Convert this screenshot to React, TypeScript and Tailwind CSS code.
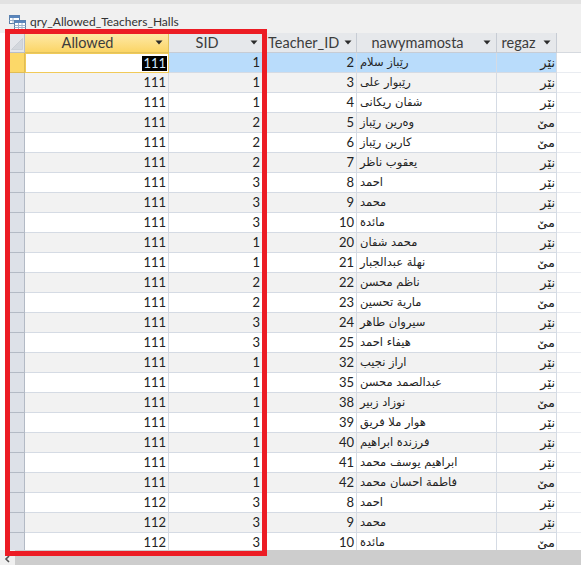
import React from "react";

type Row = [number, number, number, string, string];

const M = "نێر";
const F = "مێ";

const rows: Row[] = [
  [111, 1, 2, "رێباز سلام", M],
  [111, 1, 3, "رێبوار على", M],
  [111, 1, 4, "شفان ريكانى", M],
  [111, 2, 5, "وەرين رێباز", F],
  [111, 2, 6, "كارين رێباز", F],
  [111, 2, 7, "يعقوب ناظر", M],
  [111, 3, 8, "احمد", M],
  [111, 3, 9, "محمد", M],
  [111, 3, 10, "مائدة", F],
  [111, 1, 20, "محمد شفان", M],
  [111, 1, 21, "نهلة عبدالجبار", F],
  [111, 2, 22, "ناظم محسن", M],
  [111, 2, 23, "مارية تحسين", F],
  [111, 3, 24, "سيروان طاهر", M],
  [111, 3, 25, "هيفاء احمد", F],
  [111, 1, 32, "اراز نجيب", M],
  [111, 1, 35, "عبدالصمد محسن", M],
  [111, 1, 38, "نوزاد زبير", F],
  [111, 1, 39, "هوار ملا فريق", M],
  [111, 1, 40, "فرزندة ابراهيم", M],
  [111, 1, 41, "ابراهيم يوسف محمد", M],
  [111, 1, 42, "فاطمة احسان محمد", F],
  [112, 3, 8, "احمد", M],
  [112, 3, 9, "محمد", M],
  [112, 3, 10, "مائدة", F],
];

const latin = "font-['Lato','Liberation_Sans',sans-serif]";
const arabic = "font-['DejaVu_Sans','Noto_Sans',sans-serif]";

function Arrow() {
  return (
    <span className="w-[18px] h-full flex items-center justify-center shrink-0">
      <svg width="8" height="5" viewBox="0 0 8 5">
        <path d="M0.5 0.5 L7.5 0.5 L4 4.5 Z" fill="#2b2b2b" />
      </svg>
    </span>
  );
}

function QueryIcon() {
  return (
    <svg width="17" height="15" viewBox="0 0 17 15" className="shrink-0">
      <rect x="0.5" y="0.5" width="10" height="8" fill="#ffffff" stroke="#5b7fa8" />
      <rect x="0.5" y="0.5" width="10" height="2.5" fill="#5a86bd" />
      <line x1="0.5" y1="5.5" x2="10.5" y2="5.5" stroke="#9fb3cc" />
      <line x1="4" y1="3" x2="4" y2="8.5" stroke="#9fb3cc" />
      <rect x="5.5" y="5.5" width="11" height="9" fill="#ffffff" stroke="#5b7fa8" />
      <rect x="5.5" y="5.5" width="11" height="2.5" fill="#5a86bd" />
      <line x1="5.5" y1="10.5" x2="16.5" y2="10.5" stroke="#9fb3cc" />
      <line x1="5.5" y1="12.5" x2="16.5" y2="12.5" stroke="#9fb3cc" />
      <line x1="9.5" y1="8" x2="9.5" y2="14.5" stroke="#9fb3cc" />
      <line x1="13" y1="8" x2="13" y2="14.5" stroke="#9fb3cc" />
    </svg>
  );
}

export default function App() {
  return (
    <div className="relative w-[581px] h-[565px] overflow-hidden bg-white text-[#222]">
      {/* title strip */}
      <div className="h-[33px] bg-[#f0f0f0] border-t-[4px] border-[#e2e2e2] flex items-center pl-[9px] pt-[7px] gap-[4px]">
        <QueryIcon />
        <span className={`${latin} text-[12px] text-[#333] leading-none`}>
          qry_Allowed_Teachers_Halls
        </span>
      </div>

      {/* grid */}
      <div className="pl-[9px]">
        {/* header */}
        <div className={`flex h-[20px] ${latin} text-[14.5px] text-[#3c3c3c]`}>
          <div className="w-[16px] shrink-0 bg-[#e4e6ea] border-r border-b border-[#b8bec8] relative">
            <svg width="15" height="19" viewBox="0 0 15 19" className="absolute left-0 top-0">
              <path d="M2.5 16.5 L13.5 5.5 L13.5 16.5 Z" fill="#d3d7dd" stroke="#c6cbd2" strokeWidth="0.8" />
            </svg>
          </div>
          <div className="w-[144px] shrink-0 flex items-center bg-linear-to-b from-[#feeaa8] to-[#fbd565] border-r border-b border-[#e2c25a]">
            <span className="flex-1 text-center whitespace-nowrap">Allowed</span>
            <Arrow />
          </div>
          <div className="w-[95px] shrink-0 flex items-center bg-[#e6e8eb] border-r border-b border-[#c7ccd4]">
            <span className="flex-1 text-center whitespace-nowrap">SID</span>
            <Arrow />
          </div>
          <div className="w-[93px] shrink-0 flex items-center bg-[#e6e8eb] border-r border-b border-[#c7ccd4]">
            <span className="flex-1 pl-[4px] whitespace-nowrap">Teacher_ID</span>
            <Arrow />
          </div>
          <div className="w-[140px] shrink-0 flex items-center bg-[#e6e8eb] border-r border-b border-[#c7ccd4]">
            <span className="flex-1 text-center whitespace-nowrap">nawymamosta</span>
            <Arrow />
          </div>
          <div className="w-[60px] shrink-0 flex items-center bg-[#e6e8eb] border-r border-b border-[#c7ccd4]">
            <span className="flex-1 text-center whitespace-nowrap pl-[2px]">regaz</span>
            <Arrow />
          </div>
          <div className="flex-1 bg-[#f0f0f0] border-b border-[#d5d9df]" />
        </div>

        {/* body */}
        <div className="h-[497px] overflow-hidden">
          {rows.map((r, i) => {
            const sel = i === 0;
            const bg = sel ? "bg-[#b9dcfb]" : i % 2 === 1 ? "bg-[#f2f2f2]" : "bg-white";
            return (
              <div key={i} className="flex h-[20px]">
                <div
                  className={`w-[16px] shrink-0 border-r border-b ${
                    sel ? "bg-[#fcd868] border-[#e0bd55]" : "bg-[#dde1e8] border-[#b3bac5]"
                  }`}
                />
                {sel ? (
                  <div className="w-[144px] shrink-0 flex items-center justify-end bg-white border-[1.5px] border-[#f1ca58] pr-[1px]">
                    <span className={`${latin} text-[13px] leading-[15px] bg-black text-[#cfe9ff] px-[1px]`}>
                      {r[0]}
                    </span>
                  </div>
                ) : (
                  <div className={`w-[144px] shrink-0 flex items-center justify-end pr-[2px] border-r border-b border-[#d5dbe4] ${bg} ${latin} text-[13px]`}>
                    {r[0]}
                  </div>
                )}
                <div className={`w-[95px] shrink-0 flex items-center justify-end pr-[3px] border-r border-b border-[#d5dbe4] ${bg} ${latin} text-[13px]`}>
                  {r[1]}
                </div>
                <div className={`w-[93px] shrink-0 flex items-center justify-end pr-[2px] border-r border-b border-[#d5dbe4] ${bg} ${latin} text-[13px]`}>
                  {r[2]}
                </div>
                <div className={`w-[140px] shrink-0 flex items-center justify-start pl-[3px] border-r border-b border-[#d5dbe4] ${bg} ${arabic} text-[11.5px] overflow-hidden whitespace-nowrap`}>
                  <span dir="rtl">{r[3]}</span>
                </div>
                <div className={`w-[60px] shrink-0 flex items-center justify-end pr-[1px] border-r border-b border-[#d5dbe4] ${bg} ${arabic} text-[13px] whitespace-nowrap`}>
                  <span dir="rtl">{r[4]}</span>
                </div>
                <div className="flex-1 bg-white border-b border-[#e9ecf1]" />
              </div>
            );
          })}
        </div>
      </div>

      {/* horizontal scrollbar */}
      <div className="flex h-[15px]">
        <div className="w-[15px] h-full bg-[#f0f0f0] flex items-start justify-center pt-[5px]">
          <svg width="7" height="8" viewBox="0 0 7 8">
            <path d="M5 1 L2 4 L5 7" fill="none" stroke="#505050" strokeWidth="1.6" />
          </svg>
        </div>
        <div className="flex-1 h-full bg-[#cdcdcd]" />
      </div>

      {/* red annotation box */}
      <div className="absolute left-[5px] top-[29px] w-[262px] h-[527px] border-[5px] border-[#ec1c24] pointer-events-none" />
    </div>
  );
}
